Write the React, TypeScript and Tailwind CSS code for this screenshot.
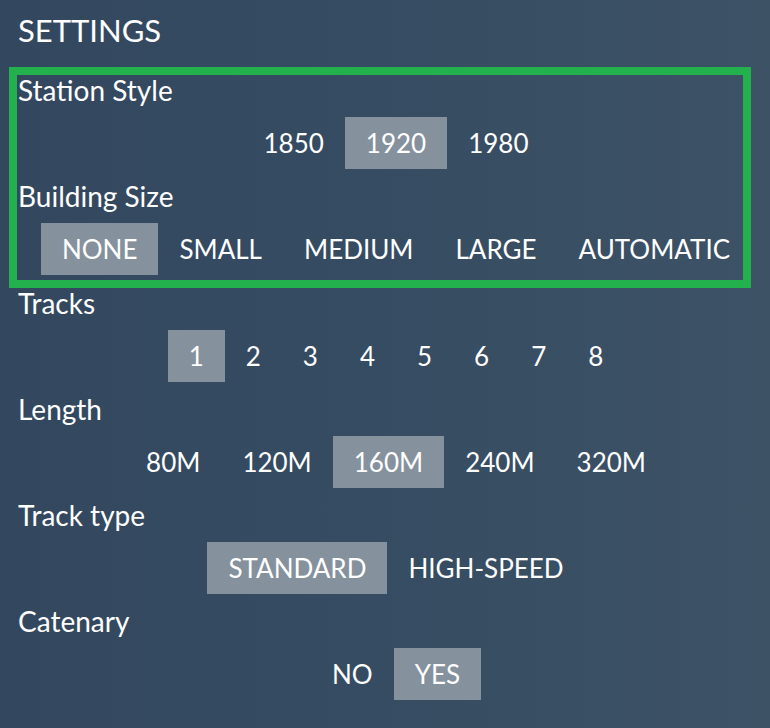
import { useState } from "react";

type Section = {
  label: string;
  options: string[];
  initial: string;
};

const highlighted: Section[] = [
  { label: "Station Style", options: ["1850", "1920", "1980"], initial: "1920" },
  {
    label: "Building Size",
    options: ["NONE", "SMALL", "MEDIUM", "LARGE", "AUTOMATIC"],
    initial: "NONE",
  },
];

const rest: Section[] = [
  { label: "Tracks", options: ["1", "2", "3", "4", "5", "6", "7", "8"], initial: "1" },
  { label: "Length", options: ["80M", "120M", "160M", "240M", "320M"], initial: "160M" },
  { label: "Track type", options: ["STANDARD", "HIGH-SPEED"], initial: "STANDARD" },
  { label: "Catenary", options: ["NO", "YES"], initial: "YES" },
];

function OptionRow({ label, options, initial }: Section) {
  const [selected, setSelected] = useState(initial);

  return (
    <div>
      <div className="text-[28px] leading-[30px]">{label}</div>
      {/* options are centred on a slightly wider strip than the panel */}
      <div className="mt-[12px] flex w-[756px] justify-center">
        {options.map((opt) => (
          <button
            key={opt}
            type="button"
            onClick={() => setSelected(opt)}
            className={`flex h-[52px] items-center px-[21px] text-[26px] leading-none ${
              selected === opt ? "bg-[#85919d]" : ""
            }`}
          >
            {opt}
          </button>
        ))}
      </div>
    </div>
  );
}

export default function App() {
  return (
    <div
      className="min-h-[728px] w-[770px] overflow-hidden bg-gradient-to-r from-[#33485e] via-[#364c62] to-[#3d5265] pl-[18px] pt-[12px] text-white"
      style={{ fontFamily: "Lato, 'Open Sans', sans-serif" }}
    >
      <h1 className="mb-[19px] text-[31px] leading-[36px] font-normal">SETTINGS</h1>

      {/* highlighted group */}
      <div className="ml-[-9px] flex w-[742px] flex-col gap-[12px] border-8 border-[#22b14c] pb-[5px] pl-px">
        {highlighted.map((s) => (
          <OptionRow key={s.label} {...s} />
        ))}
      </div>

      <div className="flex flex-col gap-[12px]">
        {rest.map((s) => (
          <OptionRow key={s.label} {...s} />
        ))}
      </div>
    </div>
  );
}
